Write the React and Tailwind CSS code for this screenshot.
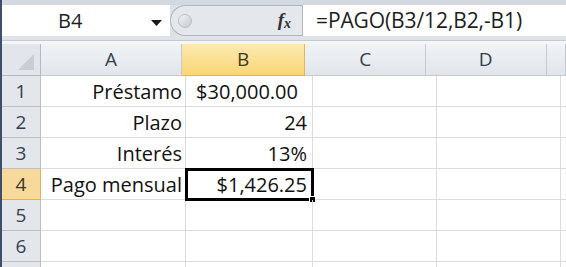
import React from "react";

const font = { fontFamily: '"Open Sans", "Noto Sans", sans-serif' };

function ColHeader({ label, w, active }) {
  return (
    <div
      className={
        "flex items-center justify-center border-r border-b text-[19px] " +
        (active
          ? "bg-gradient-to-b from-[#fdeab0] to-[#f9d675] border-[#eab64a] text-[#3a3a2a]"
          : "bg-gradient-to-b from-[#f1f3f6] to-[#e1e5ea] border-[#c3cad3] text-[#35404d]")
      }
      style={{ width: w }}
    >
      {label}
    </div>
  );
}

export default function App() {
  const cols = [
    { k: "A", w: 145 },
    { k: "B", w: 127 },
    { k: "C", w: 124 },
    { k: "D", w: 124 },
    { k: "E", w: 20 },
  ];
  const rows = [
    { n: 1, a: "Préstamo", b: "$30,000.00", bPad: "pr-[14px]" },
    { n: 2, a: "Plazo", b: "24", bPad: "pr-[5px]" },
    { n: 3, a: "Interés", b: "13%", bPad: "pr-[5px]" },
    { n: 4, a: "Pago mensual", b: "$1,426.25", bPad: "pr-[5px]", sel: true },
    { n: 5 },
    { n: 6 },
    { n: 7, hide: true },
  ];
  return (
    <div className="w-[566px] h-[267px] overflow-hidden flex bg-white" style={font}>
      <div className="w-[2px] h-full bg-[#3e4f6e] shrink-0" />
      <div className="flex-1 flex flex-col overflow-hidden">
        {/* formula bar */}
        <div className="h-[44px] shrink-0 bg-[#dde2e8] flex flex-col">
          <div className="h-[5px] bg-[#d3d9e1]" />
          <div className="h-[31px] flex">
            <div className="w-[168px] bg-white flex items-center relative">
              <span className="ml-[56px] text-[20px] text-[#1e1e1e]">B4</span>
              <svg className="absolute left-[149px] top-[15px]" width="11" height="6" viewBox="0 0 11 6">
                <path d="M0 0 L11 0 L5.5 6 Z" fill="#1a1a1a" />
              </svg>
            </div>
            <div className="w-[132px] flex items-center relative bg-[#e4e8ed] rounded-l-[16px] border border-r-0 border-[#aeb6c2]">
              <div className="ml-[7px] w-[14px] h-[14px] rounded-full bg-gradient-to-br from-[#f4f5f7] to-[#c4c9d1] border border-[#b9bfc8]" />
              <span className="ml-auto mr-[11px] text-[#333] italic font-bold text-[19px]" style={{ fontFamily: '"Liberation Serif", serif' }}>
                f<span className="text-[14px] relative top-[2px]">x</span>
              </span>
            </div>
            <div className="flex-1 bg-white border-l border-[#aeb6c2] flex items-center">
              <span className="ml-[13px] text-[21px] text-[#1e1e1e] tracking-[-0.1px]">=PAGO(B3/12,B2,-B1)</span>
            </div>
          </div>
          <div className="h-[4px] bg-[#dfe3e8]" />
          <div className="h-[1px] bg-[#c4cbd4]" />
          <div className="flex-1 bg-[#f3f5f7]" />
        </div>
        {/* header row */}
        <div className="h-[32px] shrink-0 flex">
          <div className="w-[39px] shrink-0 border-r border-b border-[#b3bac5] bg-[#e2e5ea] relative">
            <svg className="absolute right-[6px] bottom-[5px]" width="16" height="16" viewBox="0 0 16 16">
              <path d="M16 0 L16 16 L0 16 Z" fill="#c9ced6" />
            </svg>
          </div>
          {cols.map((c) => (
            <ColHeader key={c.k} label={c.k === "E" ? "" : c.k} w={c.w} active={c.k === "B"} />
          ))}
        </div>
        {rows.map((r) => (
          <div key={r.n} className="h-[31px] shrink-0 flex">
            <div
              className={
                "w-[39px] shrink-0 flex items-center justify-center border-r border-b text-[19px] " +
                (r.sel
                  ? "bg-[#f8d99c] border-[#e6b04e] text-[#3a3a2a]"
                  : "bg-[#e3e6eb] border-[#b9c0ca] text-[#35404d]")
              }
            >
              {r.hide ? "" : r.n}
            </div>
            <div className="w-[145px] shrink-0 border-r border-b border-[#dadcdf] flex items-center justify-end pr-[3px] pt-[2px] text-[20px] text-[#111]">
              {r.a}
            </div>
            <div className={"w-[127px] shrink-0 border-r border-b border-[#dadcdf] flex items-center justify-end pt-[2px] text-[20px] text-[#111] relative " + (r.bPad || "")}>
              {r.b}
              {r.sel && (
                <div className="absolute -left-[1px] -top-[1px] -right-[2px] -bottom-[2px] border-[3px] border-black">
                  <div className="absolute -right-[5px] -bottom-[5px] w-[7px] h-[7px] bg-black border border-white" />
                </div>
              )}
            </div>
            <div className="w-[124px] shrink-0 border-r border-b border-[#dadcdf]" />
            <div className="w-[124px] shrink-0 border-r border-b border-[#dadcdf]" />
            <div className="w-[20px] shrink-0 border-b border-[#dadcdf]" />
          </div>
        ))}
      </div>
    </div>
  );
}
